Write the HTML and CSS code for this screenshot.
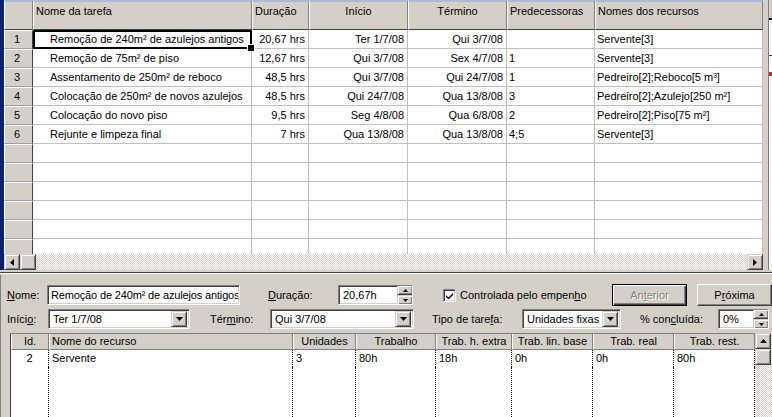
FILE: index.html
```html
<!DOCTYPE html>
<html lang="pt">
  <head>
    <meta charset="UTF-8" />
    <title>Informações da tarefa</title>
    <link rel="stylesheet" href="styles.css">
  </head>
  <body>
    <div class="top-pane">
      <div class="edge"></div>
      <div class="sheet">
        <div class="grid">
          <div class="hcell"></div>
          <div class="hcell">Nome da tarefa</div>
          <div class="hcell">Duração</div>
          <div class="hcell center">Início</div>
          <div class="hcell center">Término</div>
          <div class="hcell">Predecessoras</div>
          <div class="hcell">Nomes dos recursos</div>

          <div class="rh">1</div>
          <div class="c task sel">Remoção de 240m² de azulejos antigos</div>
          <div class="c r">20,67 hrs</div>
          <div class="c r">Ter 1/7/08</div>
          <div class="c r">Qui 3/7/08</div>
          <div class="c"></div>
          <div class="c">Servente[3]</div>

          <div class="rh">2</div>
          <div class="c task">Remoção de 75m² de piso</div>
          <div class="c r">12,67 hrs</div>
          <div class="c r">Qui 3/7/08</div>
          <div class="c r">Sex 4/7/08</div>
          <div class="c">1</div>
          <div class="c">Servente[3]</div>

          <div class="rh">3</div>
          <div class="c task">Assentamento de 250m² de reboco</div>
          <div class="c r">48,5 hrs</div>
          <div class="c r">Qui 3/7/08</div>
          <div class="c r">Qui 24/7/08</div>
          <div class="c">1</div>
          <div class="c">Pedreiro[2];Reboco[5 m³]</div>

          <div class="rh">4</div>
          <div class="c task">Colocação de 250m² de novos azulejos</div>
          <div class="c r">48,5 hrs</div>
          <div class="c r">Qui 24/7/08</div>
          <div class="c r">Qua 13/8/08</div>
          <div class="c">3</div>
          <div class="c">Pedreiro[2];Azulejo[250 m²]</div>

          <div class="rh">5</div>
          <div class="c task">Colocação do novo piso</div>
          <div class="c r">9,5 hrs</div>
          <div class="c r">Seg 4/8/08</div>
          <div class="c r">Qua 6/8/08</div>
          <div class="c">2</div>
          <div class="c">Pedreiro[2];Piso[75 m²]</div>

          <div class="rh">6</div>
          <div class="c task">Rejunte e limpeza final</div>
          <div class="c r">7 hrs</div>
          <div class="c r">Qua 13/8/08</div>
          <div class="c r">Qua 13/8/08</div>
          <div class="c">4;5</div>
          <div class="c">Servente[3]</div>

          <div class="rh"></div><div class="c"></div><div class="c"></div><div class="c"></div><div class="c"></div><div class="c"></div><div class="c"></div>
          <div class="rh"></div><div class="c"></div><div class="c"></div><div class="c"></div><div class="c"></div><div class="c"></div><div class="c"></div>
          <div class="rh"></div><div class="c"></div><div class="c"></div><div class="c"></div><div class="c"></div><div class="c"></div><div class="c"></div>
          <div class="rh"></div><div class="c"></div><div class="c"></div><div class="c"></div><div class="c"></div><div class="c"></div><div class="c"></div>
          <div class="rh"></div><div class="c"></div><div class="c"></div><div class="c"></div><div class="c"></div><div class="c"></div><div class="c"></div>
          <div class="rh"></div><div class="c"></div><div class="c"></div><div class="c"></div><div class="c"></div><div class="c"></div><div class="c"></div>
        </div>
        <div class="hscroll">
          <div class="sbtn"><svg width="4" height="7"><path d="M4 0V7L0 3.5z"/></svg></div>
          <div class="sbtn"></div>
          <div class="track"></div>
          <div class="sbtn"><svg width="4" height="7"><path d="M0 0V7L4 3.5z"/></svg></div>
        </div>
      </div>
      <div class="vsplit"></div>
      <div class="gantt">
        <div class="gantt-head"></div>
        <div class="gantt-mark blue"></div>
        <div class="gantt-mark red"></div>
      </div>
    </div>

    <div class="pane-split"></div>

    <div class="form-pane">
      <div class="form-edge"></div>
      <div class="form-body">
        <div class="form-row first">
          <span class="lbl w-nome"><u>N</u>ome:</span>
          <div class="field w-name"><span class="val">Remoção de 240m² de azulejos antigos</span></div>
          <span class="lbl w-dur"><u>D</u>uração:</span>
          <div class="field spin w-durf">
            <span class="val">20,67h</span>
            <div class="spinner">
              <div class="sp"><svg width="5" height="3"><path d="M0 3H5L2.5 0z"/></svg></div>
              <div class="sp"><svg width="5" height="3"><path d="M0 0H5L2.5 3z"/></svg></div>
            </div>
          </div>
          <div class="check"><svg width="7" height="7"><path d="M0 3L2.5 5.5L7 1V3L2.5 7.5L0 5z"/></svg></div>
          <span class="check-label">Controlada pelo empen<u>h</u>o</span>
          <div class="btn default disabled">An<u>t</u>erior</div>
          <div class="btn next">P<u>r</u>óxima</div>
        </div>
        <div class="form-row second">
          <span class="lbl w-ini">Iníci<u>o</u>:</span>
          <div class="field combo w-inif">
            <span class="val">Ter 1/7/08</span>
            <div class="drop"><svg width="7" height="4"><path d="M0 0H7L3.5 4z"/></svg></div>
          </div>
          <span class="lbl w-ter">Tér<u>m</u>ino:</span>
          <div class="field combo w-terf">
            <span class="val">Qui 3/7/08</span>
            <div class="drop"><svg width="7" height="4"><path d="M0 0H7L3.5 4z"/></svg></div>
          </div>
          <span class="lbl w-tipo">Tipo de tare<u>f</u>a:</span>
          <div class="field combo w-tipof">
            <span class="val">Unidades fixas</span>
            <div class="drop"><svg width="7" height="4"><path d="M0 0H7L3.5 4z"/></svg></div>
          </div>
          <span class="lbl w-pct">% con<u>c</u>luída:</span>
          <div class="field spin w-pctf">
            <span class="val">0%</span>
            <div class="spinner">
              <div class="sp"><svg width="5" height="3"><path d="M0 3H5L2.5 0z"/></svg></div>
              <div class="sp"><svg width="5" height="3"><path d="M0 0H5L2.5 3z"/></svg></div>
            </div>
          </div>
        </div>
        <div class="res">
          <div class="res-grid">
            <div class="rhd">Id.</div>
            <div class="rhd left">Nome do recurso</div>
            <div class="rhd">Unidades</div>
            <div class="rhd">Trabalho</div>
            <div class="rhd">Trab. h. extra</div>
            <div class="rhd">Trab. lin. base</div>
            <div class="rhd">Trab. real</div>
            <div class="rhd">Trab. rest.</div>

            <div class="rc mid">2</div>
            <div class="rc">Servente</div>
            <div class="rc">3</div>
            <div class="rc">80h</div>
            <div class="rc">18h</div>
            <div class="rc">0h</div>
            <div class="rc">0h</div>
            <div class="rc">80h</div>

            <div class="rc"></div><div class="rc"></div><div class="rc"></div><div class="rc"></div>
            <div class="rc"></div><div class="rc"></div><div class="rc"></div><div class="rc"></div>
          </div>
          <div class="vscroll">
            <div class="sbtn"><svg width="7" height="4"><path d="M0 4H7L3.5 0z"/></svg></div>
            <div class="sbtn"></div>
            <div class="track"></div>
          </div>
          <div class="track res-rest"></div>
        </div>
      </div>
    </div>
  </body>
</html>
```

FILE: styles.css
```css
* {
  box-sizing: border-box;
}
body {
  margin: 0;
  width: 772px;
  height: 417px;
  overflow: hidden;
  background-color: #d4d0c8;
  font-family: "Liberation Sans", Arial, sans-serif;
  font-size: 11px;
  color: #000;
}
svg {
  display: block;
  fill: #000;
}

/* task sheet */
.top-pane {
  display: flex;
  height: 270px;
}
.edge {
  width: 4px;
  background-color: #0a246a;
}
.sheet {
  width: 759px;
  display: flex;
  flex-direction: column;
}
.grid {
  height: 254px;
  overflow: hidden;
  display: grid;
  grid-template-columns: 29px 219px 57px 99px 99px 88px 168px;
  grid-template-rows: 30px;
  grid-auto-rows: 19px;
  background-color: #fff;
}
.hcell {
  background-color: #d4d0c8;
  border-top: 2px solid #a9bbdc;
  border-left: 1px solid #fff;
  border-right: 1px solid #808080;
  border-bottom: 1px solid #404040;
  padding: 3px 2px 0;
  white-space: nowrap;
  overflow: hidden;
}
.hcell.center {
  text-align: center;
}
.rh {
  background-color: #d4d0c8;
  border-top: 1px solid #fff;
  border-left: 1px solid #fff;
  border-bottom: 1px solid #a0a0a0;
  border-right: 1px solid #404040;
  text-align: center;
  padding-right: 3px;
  line-height: 17px;
}
.c {
  border-right: 1px solid #c0c0c0;
  border-bottom: 1px solid #c0c0c0;
  line-height: 18px;
  padding: 0 2px;
  white-space: nowrap;
  overflow: hidden;
}
.c.r {
  text-align: right;
  padding-right: 3px;
}
.c.task {
  padding-left: 17px;
}
.c.sel {
  position: relative;
  overflow: visible;
}
.c.sel::after {
  content: "";
  position: absolute;
  left: 0;
  top: 0;
  right: -1px;
  bottom: -1px;
  border: 2px solid #000;
}
.c.sel::before {
  content: "";
  position: absolute;
  right: -4px;
  bottom: -4px;
  width: 6px;
  height: 6px;
  background-color: #000;
  border: 1px solid #fff;
  z-index: 1;
}

/* scrollbars */
.hscroll {
  display: flex;
  height: 16px;
}
.sbtn {
  width: 16px;
  height: 16px;
  flex: none;
  display: flex;
  align-items: center;
  justify-content: center;
  background-color: #d4d0c8;
  border: 1px solid;
  border-color: #d4d0c8 #404040 #404040 #d4d0c8;
  box-shadow: inset 1px 1px #fff, inset -1px -1px #808080;
}
.track {
  flex: 1;
  background-color: #fff;
  background-image: repeating-conic-gradient(#d4d0c8 0 25%, #fff 0 50%);
  background-size: 2px 2px;
}
.vsplit {
  width: 6px;
  background-color: #d4d0c8;
  border-right: 1px solid #808080;
}
.gantt {
  flex: 1;
  background-color: #fff;
}
.gantt-head {
  height: 20px;
  background-color: #d4d0c8;
  border-bottom: 2px solid #000;
}
.gantt-mark.blue {
  height: 1px;
  margin-top: 35px;
  background-color: #2040c0;
}
.gantt-mark.red {
  height: 4px;
  margin-top: 16px;
  background-color: #c03030;
}

.pane-split {
  height: 5px;
  background: linear-gradient(#d4d0c8 0 2px, #404040 2px 3px, #fff 3px 4px, #d4d0c8 4px);
}

/* task form */
.form-pane {
  display: flex;
  height: 142px;
}
.form-edge {
  width: 3px;
  background-color: #808080;
}
.form-body {
  flex: 1;
  padding: 9px 0 0 6px;
  white-space: nowrap;
}
.form-row {
  display: flex;
  align-items: center;
}
.form-row.first {
  height: 22px;
}
.form-row.second {
  height: 20px;
  margin-top: 3px;
}
.lbl {
  flex: none;
}
.field {
  flex: none;
  height: 20px;
  display: flex;
  align-items: center;
  background-color: #fff;
  border: 1px solid;
  border-color: #808080 #fff #fff #808080;
  box-shadow: inset 1px 1px #404040, inset -1px -1px #d4d0c8;
  padding: 0 2px 0 4px;
  overflow: hidden;
}
.field .val {
  flex: 1;
  overflow: hidden;
}
.combo {
  padding-right: 2px;
}
.drop,
.sp {
  flex: none;
  display: flex;
  align-items: center;
  justify-content: center;
  background-color: #d4d0c8;
  border: 1px solid;
  border-color: #d4d0c8 #404040 #404040 #d4d0c8;
  box-shadow: inset 1px 1px #fff, inset -1px -1px #808080;
}
.drop {
  width: 16px;
  height: 16px;
}
.spin {
  padding-right: 0;
}
.spinner {
  flex: none;
  width: 16px;
  height: 20px;
  margin-right: -1px;
  display: flex;
  flex-direction: column;
  background-color: #d4d0c8;
}
.sp {
  height: 10px;
}

.w-nome { width: 40px; }
.w-name { width: 193px; padding: 0 1px 0 3px; letter-spacing: -0.15px; }
.w-dur { width: 70px; margin-left: 28px; }
.w-durf { width: 75px; }
.w-ini { width: 41px; }
.w-inif { width: 142px; }
.w-ter { width: 60px; margin-left: 20px; }
.w-terf { width: 144px; }
.w-tipo { width: 90px; margin-left: 18px; }
.w-tipof { width: 99px; }
.w-pct { width: 78px; margin-left: 19px; }
.w-pctf { width: 51px; }

.check {
  flex: none;
  width: 13px;
  height: 13px;
  margin-left: 30px;
  display: flex;
  align-items: center;
  justify-content: center;
  background-color: #fff;
  border: 1px solid;
  border-color: #808080 #fff #fff #808080;
  box-shadow: inset 1px 1px #404040, inset -1px -1px #d4d0c8;
}
.check-label {
  flex: none;
  width: 152px;
  margin-left: 4px;
}
.btn {
  flex: none;
  width: 75px;
  height: 22px;
  display: flex;
  align-items: center;
  justify-content: center;
  background-color: #d4d0c8;
  border: 1px solid;
  border-color: #fff #404040 #404040 #fff;
  box-shadow: inset -1px -1px #808080;
}
.btn.default {
  border: 1px solid #000;
  box-shadow: inset 1px 1px #fff, inset -1px -1px #404040, inset -2px -2px #808080;
}
.btn.disabled {
  color: #808080;
  text-shadow: 1px 1px #fff;
}
.btn.next {
  margin-left: 10px;
}

/* resource table */
.res {
  display: flex;
  height: 100px;
  margin-top: 4px;
  margin-left: 3px;
}
.res-grid {
  flex: none;
  display: grid;
  grid-template-columns: 38px 244px 63px 80px 76px 81px 81px 81px;
  grid-template-rows: 16px 17px 1fr;
  background-color: #fff;
  border-left: 1px solid #404040;
  border-top: 1px solid #808080;
}
.rhd {
  background-color: #d4d0c8;
  border-left: 1px solid #fff;
  border-right: 1px solid #808080;
  border-bottom: 1px solid #808080;
  text-align: center;
  line-height: 14px;
  overflow: hidden;
}
.rhd.left {
  text-align: left;
  padding-left: 2px;
}
.rc {
  border-right: 1px dotted #000;
  padding: 1px 3px 0;
  line-height: 14px;
}
.rc.mid {
  text-align: center;
}
.vscroll {
  width: 16px;
  display: flex;
  flex-direction: column;
}
.res-rest {
  flex: 1;
}
```
